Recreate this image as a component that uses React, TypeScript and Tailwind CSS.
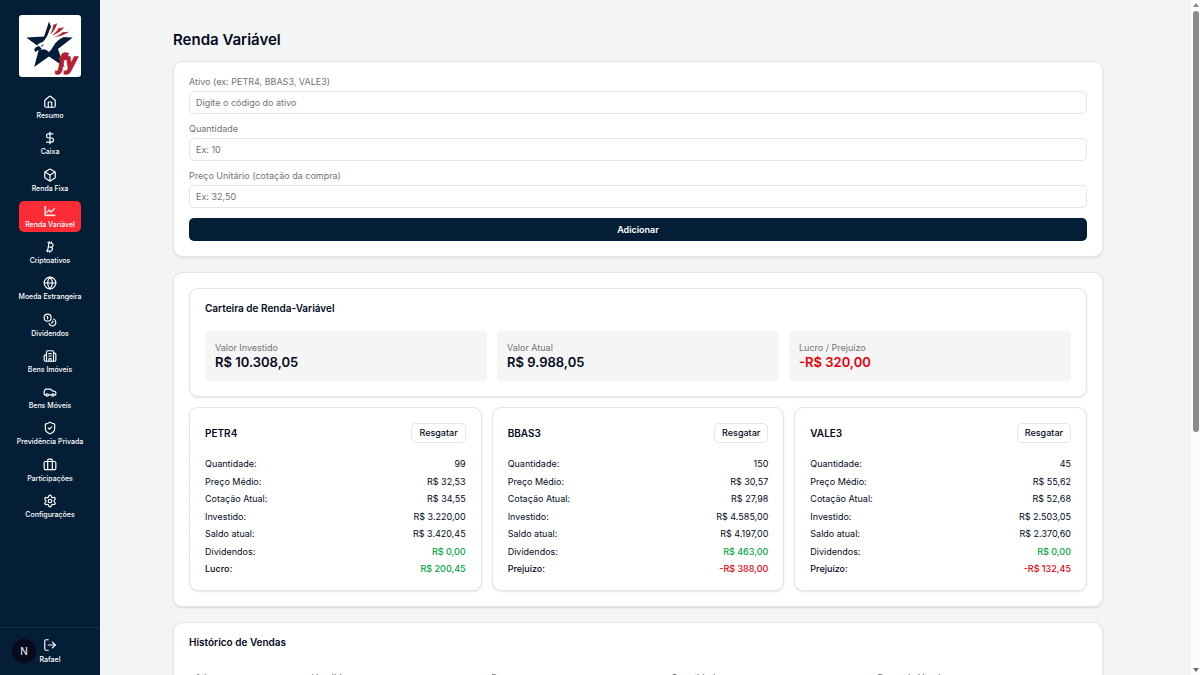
import React from "react";
import {
  Bitcoin,
  Box,
  Briefcase,
  Building2,
  Car,
  Coins,
  DollarSign,
  Globe,
  House,
  LogOut,
  Settings,
  ShieldCheck,
} from "lucide-react";
import { AiOutlineLineChart } from "react-icons/ai";

const navItems = [
  { label: "Resumo", icon: House },
  { label: "Caixa", icon: DollarSign },
  { label: "Renda Fixa", icon: Box },
  { label: "Renda Variável", icon: AiOutlineLineChart, active: true },
  { label: "Criptoativos", icon: Bitcoin },
  { label: "Moeda Estrangeira", icon: Globe },
  { label: "Dividendos", icon: Coins },
  { label: "Bens Imóveis", icon: Building2 },
  { label: "Bens Móveis", icon: Car },
  { label: "Previdência Privada", icon: ShieldCheck },
  { label: "Participações", icon: Briefcase },
  { label: "Configurações", icon: Settings },
];

const fields = [
  { id: "ativo", label: "Ativo (ex: PETR4, BBAS3, VALE3)", placeholder: "Digite o código do ativo" },
  { id: "quantidade", label: "Quantidade", placeholder: "Ex: 10" },
  { id: "preco", label: "Preço Unitário (cotação da compra)", placeholder: "Ex: 32,50" },
];

const summary = [
  { label: "Valor Investido", value: "R$ 10.308,05" },
  { label: "Valor Atual", value: "R$ 9.988,05" },
  { label: "Lucro / Prejuízo", value: "-R$ 320,00", negative: true },
];

const assets = [
  {
    ticker: "PETR4",
    rows: [
      ["Quantidade:", "99"],
      ["Preço Médio:", "R$ 32,53"],
      ["Cotação Atual:", "R$ 34,55"],
      ["Investido:", "R$ 3.220,00"],
      ["Saldo atual:", "R$ 3.420,45"],
    ],
    dividends: "R$ 0,00",
    result: "R$ 200,45",
    profit: true,
  },
  {
    ticker: "BBAS3",
    rows: [
      ["Quantidade:", "150"],
      ["Preço Médio:", "R$ 30,57"],
      ["Cotação Atual:", "R$ 27,98"],
      ["Investido:", "R$ 4.585,00"],
      ["Saldo atual:", "R$ 4.197,00"],
    ],
    dividends: "R$ 463,00",
    result: "-R$ 388,00",
    profit: false,
  },
  {
    ticker: "VALE3",
    rows: [
      ["Quantidade:", "45"],
      ["Preço Médio:", "R$ 55,62"],
      ["Cotação Atual:", "R$ 52,68"],
      ["Investido:", "R$ 2.503,05"],
      ["Saldo atual:", "R$ 2.370,60"],
    ],
    dividends: "R$ 0,00",
    result: "-R$ 132,45",
    profit: false,
  },
];

const Logo = () => (
  <svg viewBox="0 0 188 188" className="size-[62px] rounded-[3px] bg-white">
    {/* star */}
    <path
      d="M91 20 L109 66 L163 68 L118 103 L138 158 L91 126 L46 158 L62 98 L22 68 L76 65 Z"
      fill="#041e3a"
    />
    {/* eagle */}
    <path
      d="M54 96 Q57 86 72 82 Q86 68 92 46 L104 24 L118 26 L138 40 L150 54 L140 64 L122 74 Q108 84 102 98 Q98 108 90 112 Q80 100 68 106 L62 100 Z"
      fill="#fff"
    />
    <path d="M46 106 Q50 94 62 95 L70 104 Q58 104 50 112 Z" fill="#041e3a" />
    <path d="M66 93 L76 89 L70 96 Z" fill="#041e3a" />
    <g fill="#b5202e">
      <path d="M94 60 Q102 46 104 30 L116 25 Q110 46 94 60 Z" />
      <path d="M100 62 Q114 52 120 40 L137 37 Q122 56 100 62 Z" />
      <path d="M102 68 Q122 62 132 52 L152 51 Q128 66 102 68 Z" />
    </g>
    <text
      x="118"
      y="164"
      fill="#b5202e"
      stroke="#b5202e"
      strokeWidth="4"
      className="font-['Open_Sans',sans-serif] text-[64px] font-bold italic"
    >
      fy
    </text>
  </svg>
);

const Sidebar = () => (
  <aside className="flex w-[100px] shrink-0 flex-col items-center bg-[#041e36] pt-[15px] text-white">
    <Logo />
    <nav className="mt-[15px] flex h-[430px] flex-col items-center justify-between">
      {navItems.map(({ label, icon: Icon, active }) => (
        <a
          key={label}
          href="#"
          className={`flex w-[62px] flex-col items-center gap-[2px] rounded-[5px] px-[3px] pt-[3px] pb-[2px] ${active ? "bg-[#fb2c36]" : ""}`}
        >
          {active ? (
            <Icon className="size-[14px] shrink-0" stroke="currentColor" strokeWidth={30} />
          ) : (
            <Icon className="size-[14px] shrink-0" />
          )}
          <span className="text-[7px] leading-[10px] font-medium whitespace-nowrap">{label}</span>
        </a>
      ))}
    </nav>
    <div className="relative mt-auto flex w-full justify-center border-t border-[#1a2d48] pt-[10px] pb-[10px]">
      <button type="button" className="flex flex-col items-center gap-[3px]">
        <LogOut className="size-[14px]" />
        <span className="text-[7px] leading-[10px] font-medium">Rafael</span>
      </button>
      {/* dev tools badge */}
      <span className="absolute bottom-3 left-3 flex size-6 items-center justify-center rounded-full bg-[#060a1c] text-[10px] ring-1 ring-[#0c1a30]">
        N
      </span>
    </div>
  </aside>
);

const Card = ({ children, className = "" }: { children: React.ReactNode; className?: string }) => (
  <section
    className={`rounded-[9px] border border-[#e5e5e5] bg-white p-[15px] shadow-[0_1px_2px_rgba(0,0,0,0.1)] ${className}`}
  >
    {children}
  </section>
);

const AssetForm = () => (
  <Card>
    <form className="flex flex-col gap-[10px]" onSubmit={(e) => e.preventDefault()}>
      {fields.map((field) => (
        <div key={field.id} className="flex flex-col gap-1">
          <label htmlFor={field.id} className="text-[9px] leading-[10px] text-[#737373]">
            {field.label}
          </label>
          <input
            id={field.id}
            placeholder={field.placeholder}
            className="h-[23px] w-full rounded-[5px] border border-[#e5e5e5] px-[6px] text-[9px] placeholder:text-[#737373]"
          />
        </div>
      ))}
      <button type="submit" className="h-[23px] rounded-[5px] bg-[#041e36] text-[9px] font-semibold text-white">
        Adicionar
      </button>
    </form>
  </Card>
);

const AssetCard = ({ asset }: { asset: (typeof assets)[number] }) => (
  <Card>
    <div className="flex items-center justify-between">
      <h3 className="text-[10px] leading-[10px] font-semibold">{asset.ticker}</h3>
      <button type="button" className="h-5 rounded-[5px] border border-[#e5e5e5] px-[7px] text-[9px] font-medium">
        Resgatar
      </button>
    </div>
    <dl className="mt-[14px] flex h-[118px] flex-col justify-between text-[9px] leading-[13px]">
      {asset.rows.map(([label, value]) => (
        <div key={label} className="flex justify-between">
          <dt>{label}</dt>
          <dd>{value}</dd>
        </div>
      ))}
      <div className="flex justify-between">
        <dt>Dividendos:</dt>
        <dd className="font-medium text-[#00a63e]">{asset.dividends}</dd>
      </div>
      <div className="flex justify-between font-medium">
        <dt>{asset.profit ? "Lucro:" : "Prejuízo:"}</dt>
        <dd className={asset.profit ? "text-[#00a63e]" : "text-[#e7000b]"}>{asset.result}</dd>
      </div>
    </dl>
  </Card>
);

const Portfolio = () => (
  <Card className="flex flex-col gap-[10px]">
    <Card>
      <h2 className="text-[10px] leading-[8px] font-semibold">Carteira de Renda-Variável</h2>
      <div className="mt-[19px] grid grid-cols-3 gap-[10px]">
        {summary.map((item) => (
          <div key={item.label} className="rounded-[4px] bg-[#f5f5f5] p-[10px]">
            <p className="text-[9px] leading-[13px] text-[#737373]">{item.label}</p>
            <p className={`text-[13px] leading-[17px] font-semibold ${item.negative ? "text-[#e7000b]" : ""}`}>
              {item.value}
            </p>
          </div>
        ))}
      </div>
    </Card>
    <div className="grid grid-cols-3 gap-[10px]">
      {assets.map((asset) => (
        <AssetCard key={asset.ticker} asset={asset} />
      ))}
    </div>
  </Card>
);

const SalesHistory = () => (
  <Card>
    <h2 className="text-[10px] leading-[8px] font-semibold">Histórico de Vendas</h2>
    <table className="mt-4 w-full table-fixed text-left text-[9px] leading-[13px] text-[#737373]">
      <thead>
        <tr>
          <th className="w-[13%] px-[6px] pt-[9px] font-medium">Ativo</th>
          <th className="w-[20%] px-[6px] pt-[9px] font-medium">Vendido</th>
          <th className="w-[20%] px-[6px] pt-[9px] font-medium">Preço</th>
          <th className="w-[23%] px-[6px] pt-[9px] font-medium">Quantidade</th>
          <th className="px-[6px] pt-[9px] font-medium">Preço de Venda</th>
        </tr>
      </thead>
    </table>
  </Card>
);

// always-visible page scrollbar
const ScrollTrack = () => (
  <div className="flex w-[9px] shrink-0 flex-col items-center justify-between bg-[#fcfcfc] py-[3px]">
    <svg viewBox="0 0 6 4" className="h-1 w-[6px]" fill="#8b8b8b">
      <path d="M0 4 L3 0 L6 4 Z" />
    </svg>
    <div className="mt-1 mb-auto h-[63%] w-[6px] rounded-full bg-[#8b8b8b]" />
    <svg viewBox="0 0 6 4" className="h-1 w-[6px]" fill="#6b6b6b">
      <path d="M0 0 L3 4 L6 0 Z" />
    </svg>
  </div>
);

export default function App() {
  return (
    <div className="flex h-screen overflow-hidden bg-[#f3f4f6] font-[Inter,sans-serif] text-[#030a1c]">
      <Sidebar />
      <main className="min-w-0 flex-1 overflow-hidden pt-[30px] pr-[15px]">
        <div className="mx-auto flex w-full max-w-[930px] flex-col gap-[15px]">
          <h1 className="-mb-[4px] text-[15px] leading-5 font-semibold">Renda Variável</h1>
          <AssetForm />
          <Portfolio />
          <SalesHistory />
        </div>
      </main>
      <ScrollTrack />
    </div>
  );
}
